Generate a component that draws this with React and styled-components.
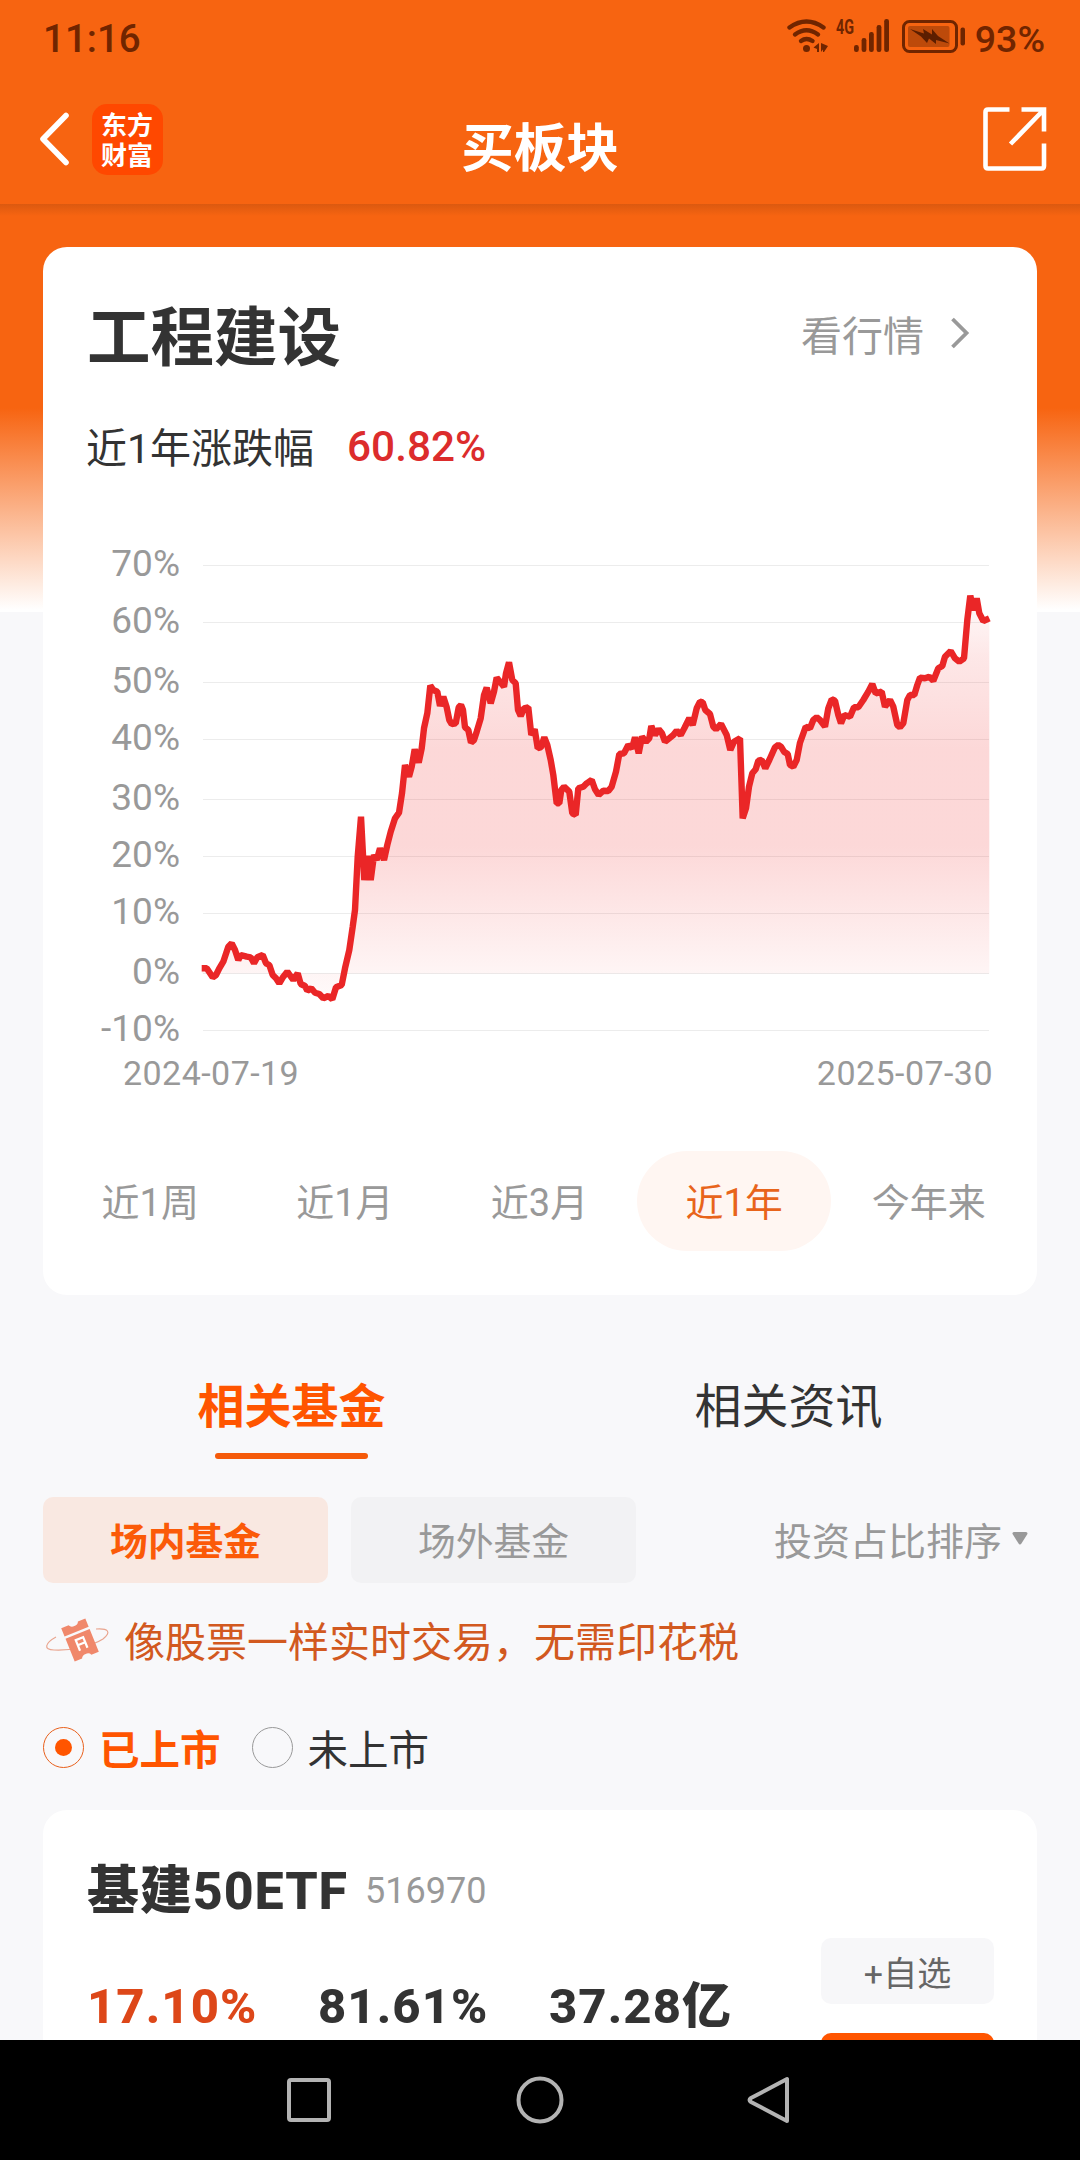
import { useState } from 'react';
import styled, { createGlobalStyle } from 'styled-components';

const GRID = [
  { label: '70%', y: 565.5 },
  { label: '60%', y: 622.5 },
  { label: '50%', y: 682.5 },
  { label: '40%', y: 739.5 },
  { label: '30%', y: 799.5 },
  { label: '20%', y: 856.5 },
  { label: '10%', y: 913.5 },
  { label: '0%', y: 973.5 },
  { label: '-10%', y: 1030.5 },
];

const TREND = `
  201.7,968.3 206.7,968.3 212.7,977.3 216,975 219.3,968.3 223.3,961.7 228.3,946.7
  231.7,943.3 235,950 238.3,960 240.7,955 246.7,956.7 250.7,957.3 254,963.3
  257.3,957.3 262.7,955 266,963.3 269.3,965 272.7,975 276,978.3 279.3,983.3
  283.3,976.7 287.3,971.7 293.3,980 297.7,973.3 300.7,984 305,986 307.3,990.7
  311.3,988.3 315,992.7 319.3,994 323.3,998.3 328.3,996 332.3,999.3 336,987.3
  341.7,985 345,968.3 349.3,950 352.7,926.7 355,910 357.7,856.7 361,816.7
  364.3,880 367.3,856 370.7,880 374,855 376.7,860 380,848.3 384,860 387.3,845
  390.7,831.7 395,818.3 399,812.7 402,793.3 405,765 409,776.7 411.7,766.7
  414.7,749.3 418.7,762.7 421.7,748.3 424,728.3 427.3,713.3 430.3,685.7
  433.3,690 437.3,691.7 440,706 443.3,696.7 446.7,707.3 449.3,720 451.7,724
  455.7,723.3 458.7,707.3 461,705 463,710 465,727.3 468.3,730 471,742.7 474,740
  476.7,731.7 480.7,718.3 484,695 486.7,687.7 490.7,703.3 494,691.7 496.7,677.7
  500,681.7 504,686.7 506,673.3 509,662.3 512.3,680 515.7,683.3 518,710 520.7,716
  524,708.3 528.3,707.3 531.3,735 534.7,729.3 537.7,748.3 541,747.3 544.3,737.3
  547.3,745 550.7,760 553.3,775 556.7,803.3 559.3,803.3 561.3,790 564,786.7
  569.3,791.7 572.3,813.3 575.7,815 578.3,788.3 583.3,786.7 586.7,783.3 591.7,780
  595,789.3 598.7,795 603.3,790.7 608.3,791 611.7,786.7 616,771.7 619.3,754
  624,753.3 628.3,745 632,748.3 635,737.3 638.7,753.3 642,736.7 646,741.7
  649.3,738.3 651.3,726 655,735 658.7,729.3 662,733.3 665,741.7 669.3,738.3
  673.3,735 676.7,730.7 680.7,735 684.3,728.3 689.3,718.3 692.7,725 696.7,708.3
  700,701.7 702.7,702.3 705.3,710 710,714 713.3,726.7 716,729.3 721,724
  726.7,735 730.3,750 734,741.7 740,738.3 742.7,818.3 746,808.3 749,786.7
  752.3,773.3 755.7,769.3 758.3,760.7 761.7,760 765.3,768.3 769.3,760 775,747.3
  778.3,745 781,746.7 784,751.7 787.7,754 790,765 793.3,766.7 796.7,760
  800,742.7 805.7,726.7 810,728.3 813.3,720 816.7,717.3 820,720 825,726.7
  828.3,708.3 831.7,699.3 835,700.7 838.3,715 841,723.3 844.3,715 850,716.7
  854,707.3 858.3,707.3 863.3,700 868.3,691.7 872.3,684 875.7,693.3 881.7,691.7
  885,706.7 890,700 893.3,706.7 897.3,725 900,727.3 903.3,723.3 907.3,700
  910,695 914.3,695 917.3,685 920,677.7 925,678.3 929.3,676.7 933.3,680.7
  938.3,668.3 942.3,666 945,656.7 950.7,651 955,658.3 959.3,661.7 964,658.3
  967.3,620 970.3,595.7 973.3,610 976.7,598.3 979.3,613.3 983.3,621 989.3,618.3
`;

const PERIODS = ['近1周', '近1月', '近3月', '近1年', '今年来'];
const SECTIONS = ['相关基金', '相关资讯'];
const MARKETS = ['场内基金', '场外基金'];
const LISTINGS = ['已上市', '未上市'];

export default function App() {
  const [period, setPeriod] = useState('近1年');
  const [section, setSection] = useState('相关基金');
  const [market, setMarket] = useState('场内基金');
  const [listing, setListing] = useState('已上市');

  return (
    <Screen>
      <GlobalStyle />
      <StatusBar>
        <Time>11:16</Time>
        <StatusIcons />
        <Battery>93%</Battery>
      </StatusBar>
      <Header>
        <HeaderLeft>
          <BackIcon />
          <Logo>东方财富</Logo>
        </HeaderLeft>
        <HeaderTitle>买板块</HeaderTitle>
        <ShareIcon />
      </Header>

      <Content>
        <SectorCard>
          <SectorHead>
            <SectorName>工程建设</SectorName>
            <QuoteLink>
              看行情
              <ChevronIcon />
            </QuoteLink>
          </SectorHead>
          <Change>
            近1年涨跌幅
            <ChangeValue>60.82%</ChangeValue>
          </Change>
          <TrendChart />
          <Periods>
            {PERIODS.map((name) => (
              <Period
                key={name}
                $active={name === period}
                onClick={() => setPeriod(name)}
              >
                {name}
              </Period>
            ))}
          </Periods>
        </SectorCard>

        <Sections>
          {SECTIONS.map((name) => (
            <Section
              key={name}
              $active={name === section}
              onClick={() => setSection(name)}
            >
              {name}
            </Section>
          ))}
        </Sections>

        <Filters>
          {MARKETS.map((name) => (
            <Filter
              key={name}
              $active={name === market}
              onClick={() => setMarket(name)}
            >
              {name}
            </Filter>
          ))}
          <Sort>
            投资占比排序
            <CaretIcon />
          </Sort>
        </Filters>

        <Notice>
          <TicketIcon />
          <NoticeText>像股票一样实时交易，无需印花税</NoticeText>
        </Notice>

        <Listings>
          {LISTINGS.map((name) => (
            <Listing
              key={name}
              $active={name === listing}
              onClick={() => setListing(name)}
            >
              <Radio $active={name === listing} />
              {name}
            </Listing>
          ))}
        </Listings>

        <FundCard>
          <div>
            <FundHead>
              <FundName>基建50ETF</FundName>
              <FundCode>516970</FundCode>
            </FundHead>
            <FundValues>
              <FundValue $up>17.10%</FundValue>
              <FundValue>81.61%</FundValue>
              <FundValue>37.28亿</FundValue>
            </FundValues>
          </div>
          <FundActions>
            <WatchButton>+自选</WatchButton>
            <BuyButton />
          </FundActions>
        </FundCard>
      </Content>

      <NavBar>
        <svg width='506' height='50' viewBox='0 0 506 50'>
          <g fill='none' stroke='#b3b3b3' strokeWidth='4' strokeLinejoin='round'>
            <rect x='4' y='5' width='40' height='40' rx='2' />
            <circle cx='255' cy='25' r='21.5' />
            <path d='M502 4V46L466 27Q463 25 466 23Z' />
          </g>
        </svg>
      </NavBar>
    </Screen>
  );
}

function TrendChart() {
  return (
    <Chart viewBox='43 477 994 633'>
      <defs>
        <linearGradient
          id='area'
          gradientUnits='userSpaceOnUse'
          x1='0'
          y1='596'
          x2='0'
          y2='999'
        >
          <stop offset='0' stopColor='#f02626' stopOpacity='0.02' />
          <stop offset='0.15' stopColor='#f02626' stopOpacity='0.11' />
          <stop offset='0.38' stopColor='#f02626' stopOpacity='0.18' />
          <stop offset='0.62' stopColor='#f02626' stopOpacity='0.18' />
          <stop offset='0.95' stopColor='#f02626' stopOpacity='0.04' />
          <stop offset='1' stopColor='#f02626' stopOpacity='0.02' />
        </linearGradient>
      </defs>
      {GRID.map(({ label, y }) => (
        <g key={label}>
          <line x1='203' x2='989' y1={y} y2={y} stroke='#ececec' />
          <AxisLabel x='180' y={y + 10} textAnchor='end'>
            {label}
          </AxisLabel>
        </g>
      ))}
      <polygon points={`201.7,973.5 ${TREND} 989.3,973.5`} fill='url(#area)' />
      <polyline
        points={TREND}
        fill='none'
        stroke='#ea2627'
        strokeWidth='6.4'
        strokeLinejoin='bevel'
      />
      <DateLabel x='123' y='1085'>
        2024-07-19
      </DateLabel>
      <DateLabel x='993' y='1085' textAnchor='end'>
        2025-07-30
      </DateLabel>
    </Chart>
  );
}

function StatusIcons() {
  return (
    <svg width='180' height='56' viewBox='787 8 180 56' fill='#702500'>
      <g fill='none' stroke='#702500' strokeWidth='4.4' strokeLinecap='round'>
        <path d='M789.5 27.5Q806.5 15.5 823.5 27.5' />
        <path d='M795 34.5Q806.5 26 818 34.5' />
        <path d='M801 41Q806.5 37 812.5 41' />
      </g>
      <circle cx='806.5' cy='48.6' r='3.5' />
      <path d='M819 43V52H817V49L813.5 47.5ZM821 43L828 46L824 52H823V49.5L821 52Z' />
      <Network x='836' y='34' textLength='18' lengthAdjust='spacingAndGlyphs'>
        4G
      </Network>
      <rect x='854' y='45' width='4.8' height='7' rx='2.2' />
      <rect x='861.6' y='38' width='4.8' height='14' rx='2.2' />
      <rect x='869' y='32' width='4.8' height='20' rx='2.2' />
      <rect x='876.6' y='25' width='4.8' height='27' rx='2.2' />
      <rect x='884.2' y='19' width='4.8' height='33' rx='2.2' />
      <rect
        x='903.5'
        y='21.5'
        width='53'
        height='30'
        rx='6'
        fill='none'
        stroke='#702500'
        strokeWidth='3'
      />
      <rect x='908' y='26' width='41.5' height='21' rx='2' fill='#bd4a0a' />
      <path
        d='M910 29L924 33.5L923 29L932 34.500V29L938 36L949.500 43.500L936 40V44L929 38.500L927 43L921 36.500Z'
        fill='#5c1e00'
      />
      <rect x='960.5' y='27.5' width='4.5' height='18' rx='2' />
    </svg>
  );
}

function BackIcon() {
  return (
    <svg width='30' height='54' viewBox='0 0 30 54'>
      <path
        d='M27 3.5L4 27L27 50.5'
        fill='none'
        stroke='#fff'
        strokeWidth='5.6'
        strokeLinecap='round'
        strokeLinejoin='round'
      />
    </svg>
  );
}

function ShareIcon() {
  return (
    <Share width='64' height='64' viewBox='0 0 64 64'>
      <path
        d='M26.500 2.500H5Q2.500 2.500 2.500 5V59Q2.500 61.500 5 61.500H58.500Q61 61.500 61 59V36.500M38.500 2.500H61V24.500M61 2.500L27.500 37'
        fill='none'
        stroke='#fff'
        strokeWidth='4.6'
      />
    </Share>
  );
}

function ChevronIcon() {
  return (
    <svg width='22' height='34' viewBox='0 0 22 34'>
      <path
        d='M3.500 3L17.500 17L3.500 31'
        fill='none'
        stroke='#999'
        strokeWidth='3.8'
      />
    </svg>
  );
}

function CaretIcon() {
  return (
    <svg width='18' height='16' viewBox='0 0 18 16'>
      <path
        d='M3 2.500H15L9 12Z'
        fill='#999'
        stroke='#999'
        strokeWidth='3'
        strokeLinejoin='round'
      />
    </svg>
  );
}

function TicketIcon() {
  return (
    <svg width='66' height='50' viewBox='44 1616 66 50'>
      <path
        d='M56 1637C45 1643 43 1650 54 1650C70 1651 92 1646 103 1639C112 1632 108 1628 96 1629'
        fill='none'
        stroke='#e9a58f'
        strokeWidth='1.2'
      />
      <g transform='rotate(-22 80 1640)'>
        <path
          d='M67 1622H75Q76 1625 80 1625Q84 1625 85 1622H93V1631H67ZM67 1633.500H93V1658H85Q84 1655 80 1655Q76 1655 75 1658H67Z'
          fill='#f0886b'
        />
        <path
          d='M76 1650V1638.500H84V1650M76 1644H84'
          fill='none'
          stroke='#fff'
          strokeWidth='2.2'
        />
      </g>
    </svg>
  );
}

const GlobalStyle = createGlobalStyle`
  body {
    margin: 0;
    font-family: Roboto, 'Noto Sans CJK SC', sans-serif;
    color: #333;
  }
  svg {
    display: block;
    flex-shrink: 0;
  }
  button {
    font: inherit;
    color: inherit;
    padding: 0;
    border: 0;
    background: none;
    cursor: pointer;
  }
`;
const Screen = styled.div`
  display: flex;
  flex-direction: column;
  width: 1080px;
  height: 2160px;
  overflow: hidden;
  background: #f8f8fa;
`;
const StatusBar = styled.div`
  display: flex;
  align-items: center;
  flex-shrink: 0;
  box-sizing: border-box;
  height: 76px;
  padding: 0 35px 4px 43px;
  background: #f76411;
  color: #702500;
`;
const Time = styled.span`
  flex: 1;
  font-size: 38.5px;
  font-weight: 500;
  line-height: 76px;
  padding-top: 5px;
`;
const Battery = styled.span`
  font-size: 37.5px;
  font-weight: 500;
  margin-left: 8px;
  padding-top: 5px;
`;
const Network = styled.text`
  font-size: 20px;
  font-weight: 700;
`;
const Header = styled.header`
  display: grid;
  grid-template-columns: 1fr auto 1fr;
  align-items: center;
  flex-shrink: 0;
  box-sizing: border-box;
  height: 128px;
  padding: 0 33px 2px;
  background: #f76411;
  color: #fff;
`;
const HeaderLeft = styled.div`
  display: flex;
  align-items: center;
  gap: 23px;
  padding-left: 6px;
`;
const Logo = styled.div`
  box-sizing: border-box;
  width: 71px;
  height: 71px;
  padding: 5px 9px;
  border-radius: 15px;
  background: #ff4800;
  font-family: 'Noto Sans CJK SC', sans-serif;
  font-size: 26px;
  font-weight: 700;
  line-height: 30px;
  word-break: break-all;
`;
const HeaderTitle = styled.h1`
  margin: 20px 0 0;
  font-size: 52.5px;
  font-weight: 700;
  line-height: 64px;
`;
const Share = styled.svg`
  justify-self: end;
`;
const Content = styled.main`
  flex: 1;
  min-height: 0;
  overflow: hidden;
  padding: 43px 43px 0;
  background:
    linear-gradient(rgba(120, 50, 10, 0.22), rgba(120, 50, 10, 0)) 0 0 / 100%
      12px no-repeat,
    linear-gradient(#f76411 0, #f76411 204px, #fff 406px) 0 0 / 100% 408px
      no-repeat,
    #f8f8fa;
`;
const SectorCard = styled.section`
  box-sizing: border-box;
  height: 1048px;
  padding-top: 44px;
  border-radius: 24px;
  background: #fff;
`;
const SectorHead = styled.div`
  display: flex;
  align-items: center;
  justify-content: space-between;
  height: 90px;
  padding: 0 66px 0 44px;
`;
const SectorName = styled.h2`
  margin: 5px 0 0;
  font-size: 63.5px;
  font-weight: 700;
  line-height: 90px;
`;
const QuoteLink = styled.button`
  display: flex;
  align-items: center;
  gap: 25px;
  margin-bottom: 6px;
  font-size: 41px;
  color: #999;
`;
const Change = styled.div`
  display: flex;
  align-items: center;
  gap: 33px;
  height: 55px;
  margin: 36px 0 5px;
  padding-left: 43px;
  font-size: 41px;
`;
const ChangeValue = styled.span`
  padding-top: 3px;
  font-size: 42.3px;
  font-weight: 500;
  color: #dc2c2c;
`;
const Chart = styled.svg`
  width: 994px;
  height: 633px;
`;
const AxisLabel = styled.text`
  font-size: 37px;
  fill: #999;
`;
const DateLabel = styled.text`
  font-size: 34px;
  letter-spacing: 0.45px;
  fill: #999;
`;
const Periods = styled.div`
  display: grid;
  grid-template-columns: repeat(5, 1fr);
  margin-top: 41px;
  padding: 0 11px 0 10px;
`;
const Period = styled.button`
  height: 100px;
  padding-bottom: 3px;
  border-radius: 50px;
  font-size: 38px;
  color: ${({ $active }) => ($active ? '#e8641b' : '#999')};
  background: ${({ $active }) => ($active ? '#fff6f2' : 'none')};
`;
const Sections = styled.div`
  display: grid;
  grid-template-columns: 1fr 1fr;
  margin-top: 72px;
`;
const Section = styled.button`
  display: flex;
  flex-direction: column;
  align-items: center;
  justify-content: space-between;
  height: 92px;
  font-size: 47px;
  font-weight: ${({ $active }) => ($active ? 700 : 400)};
  line-height: 80px;
  color: ${({ $active }) => ($active ? '#ff5500' : '#333')};

  &::after {
    content: '';
    width: 153px;
    height: 6px;
    border-radius: 3px;
    background: ${({ $active }) => ($active ? '#f55a0a' : 'none')};
  }
`;
const Filters = styled.div`
  display: flex;
  align-items: center;
  gap: 23px;
  margin-top: 38px;
`;
const Filter = styled.button`
  width: 285px;
  height: 86px;
  padding-bottom: 3px;
  border-radius: 10px;
  font-size: 37.8px;
  font-weight: ${({ $active }) => ($active ? 700 : 400)};
  color: ${({ $active }) => ($active ? '#fb5a08' : '#999')};
  background: ${({ $active }) => ($active ? '#f9e8e1' : '#f2f2f4')};
`;
const Sort = styled.button`
  display: flex;
  align-items: center;
  gap: 9px;
  margin: 0 8px 3px auto;
  font-size: 38px;
  color: #999;
`;
const Notice = styled.div`
  display: flex;
  align-items: center;
  gap: 14px;
  height: 50px;
  margin-top: 33px;
  padding-left: 1px;
`;
const NoticeText = styled.span`
  padding-bottom: 5px;
  font-size: 41px;
  color: #d2591f;
`;
const Listings = styled.div`
  display: flex;
  gap: 31px;
  margin-top: 56px;
`;
const Listing = styled.button`
  display: flex;
  align-items: center;
  gap: 15px;
  height: 50px;
  font-size: 40.5px;
  font-weight: ${({ $active }) => ($active ? 700 : 400)};
  color: ${({ $active }) => ($active ? '#ff5500' : '#333')};
`;
const Radio = styled.span`
  display: grid;
  place-items: center;
  box-sizing: border-box;
  width: 41px;
  height: 41px;
  border: 1px solid ${({ $active }) => ($active ? '#e8601c' : '#999')};
  border-radius: 50%;

  &::after {
    content: '';
    width: 17px;
    height: 17px;
    border-radius: 50%;
    background: ${({ $active }) => ($active ? '#ff5500' : 'none')};
  }
`;
const FundCard = styled.section`
  display: flex;
  justify-content: space-between;
  margin-top: 38px;
  padding: 45px 43px 60px 44px;
  border-radius: 24px;
  background: #fff;
`;
const FundHead = styled.div`
  display: flex;
  align-items: center;
  gap: 17px;
  height: 70px;
`;
const FundName = styled.h3`
  margin: 0 0 8px;
  font-size: 52px;
  font-weight: 800;
  letter-spacing: 0.9px;
`;
const FundCode = styled.span`
  padding-top: 2px;
  font-size: 36px;
  color: #999;
`;
const FundValues = styled.div`
  display: grid;
  grid-template-columns: repeat(3, 231px);
  height: 60px;
  margin-top: 52px;
`;
const FundValue = styled.strong`
  font-size: 49px;
  font-weight: 800;
  letter-spacing: 1.1px;
  line-height: 60px;
  color: ${({ $up }) => ($up ? '#dd4719' : '#333')};
`;
const FundActions = styled.div`
  display: flex;
  flex-direction: column;
  gap: 29px;
  width: 173px;
  padding-top: 83px;
`;
const WatchButton = styled.button`
  height: 66px;
  border-radius: 10px;
  background: #f7f7f9;
  font-size: 34px;
  color: #666;
`;
const BuyButton = styled.button`
  height: 66px;
  border-radius: 10px;
  background: #ff5500;
`;
const NavBar = styled.nav`
  display: flex;
  align-items: center;
  justify-content: center;
  flex-shrink: 0;
  height: 120px;
  padding-right: 4px;
  background: #000;
`;
